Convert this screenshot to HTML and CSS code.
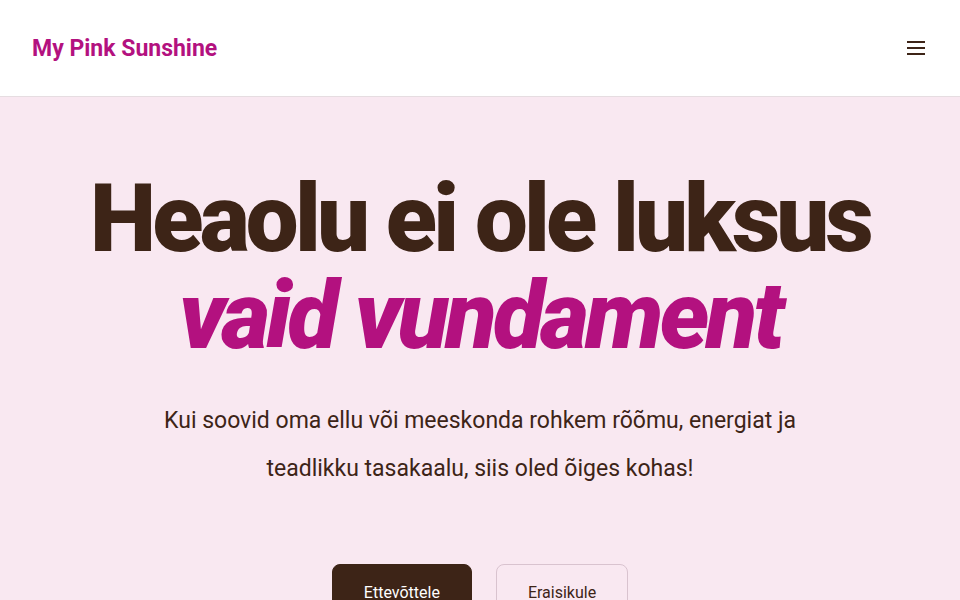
FILE: index.html
```html
<!DOCTYPE html>
<html lang="et">
<head>
<meta charset="utf-8">
<title>My Pink Sunshine</title>
<link rel="stylesheet" href="styles.css">
</head>
<body>
<header class="site-header">
  <a class="logo" href="#">My Pink Sunshine</a>
  <button class="menu-btn" aria-label="Menüü">
    <svg width="18" height="14" viewBox="0 0 18 14" fill="none" stroke="#3d2417" stroke-width="2">
      <path d="M0 1h18M0 7h18M0 13h18"/>
    </svg>
  </button>
</header>
<main class="hero">
  <h1 class="hero-title">
    <span class="line-1">Heaolu ei ole luksus</span>
    <span class="line-2">vaid vundament</span>
  </h1>
  <p class="hero-text">Kui soovid oma ellu või meeskonda rohkem rõõmu, energiat ja teadlikku tasakaalu, siis oled õiges kohas!</p>
  <div class="hero-actions">
    <a class="btn btn-dark" href="#">Ettevõttele</a>
    <a class="btn btn-outline" href="#">Eraisikule</a>
  </div>
</main>
</body>
</html>
```
FILE: styles.css
```css
* { box-sizing: border-box; }
html, body { margin: 0; padding: 0; }
body {
  font-family: Roboto, "Noto Sans", sans-serif;
  background: #f9e8f1;
  color: #3d2417;
}
.site-header {
  height: 97px;
  background: #ffffff;
  border-bottom: 1px solid #e6dde1;
  display: flex;
  align-items: center;
  justify-content: space-between;
  padding: 0 35px 0 32px;
}
.logo {
  font-size: 23px;
  font-weight: 700;
  color: #b3117f;
  text-decoration: none;
}
.menu-btn {
  background: none;
  border: 0;
  padding: 0;
  display: flex;
  align-items: center;
  justify-content: center;
}
.hero {
  display: flex;
  flex-direction: column;
  align-items: center;
  text-align: center;
  padding-top: 74px;
}
.hero-title {
  margin: 0;
  font-size: 94px;
  font-weight: 900;
  line-height: 97px;
  letter-spacing: -3.8px;
  display: flex;
  flex-direction: column;
}
.line-1 { color: #3d2417; }
.line-2 { color: #b3117f; font-style: italic; }
.hero-text {
  margin: 32px 0 0;
  max-width: 680px;
  font-size: 23px;
  line-height: 48px;
  color: #3d2417;
}
.hero-actions {
  margin-top: 71px;
  display: flex;
  gap: 24px;
}
.btn {
  display: inline-flex;
  align-items: center;
  justify-content: center;
  height: 56px;
  padding: 0 31px;
  border-radius: 8px;
  font-size: 16px;
  text-decoration: none;
}
.btn-dark {
  background: #3d2417;
  color: #ffffff;
  border: 1px solid #3d2417;
}
.btn-outline {
  background: transparent;
  color: #3d2417;
  border: 1px solid #d9c3cf;
}
```
